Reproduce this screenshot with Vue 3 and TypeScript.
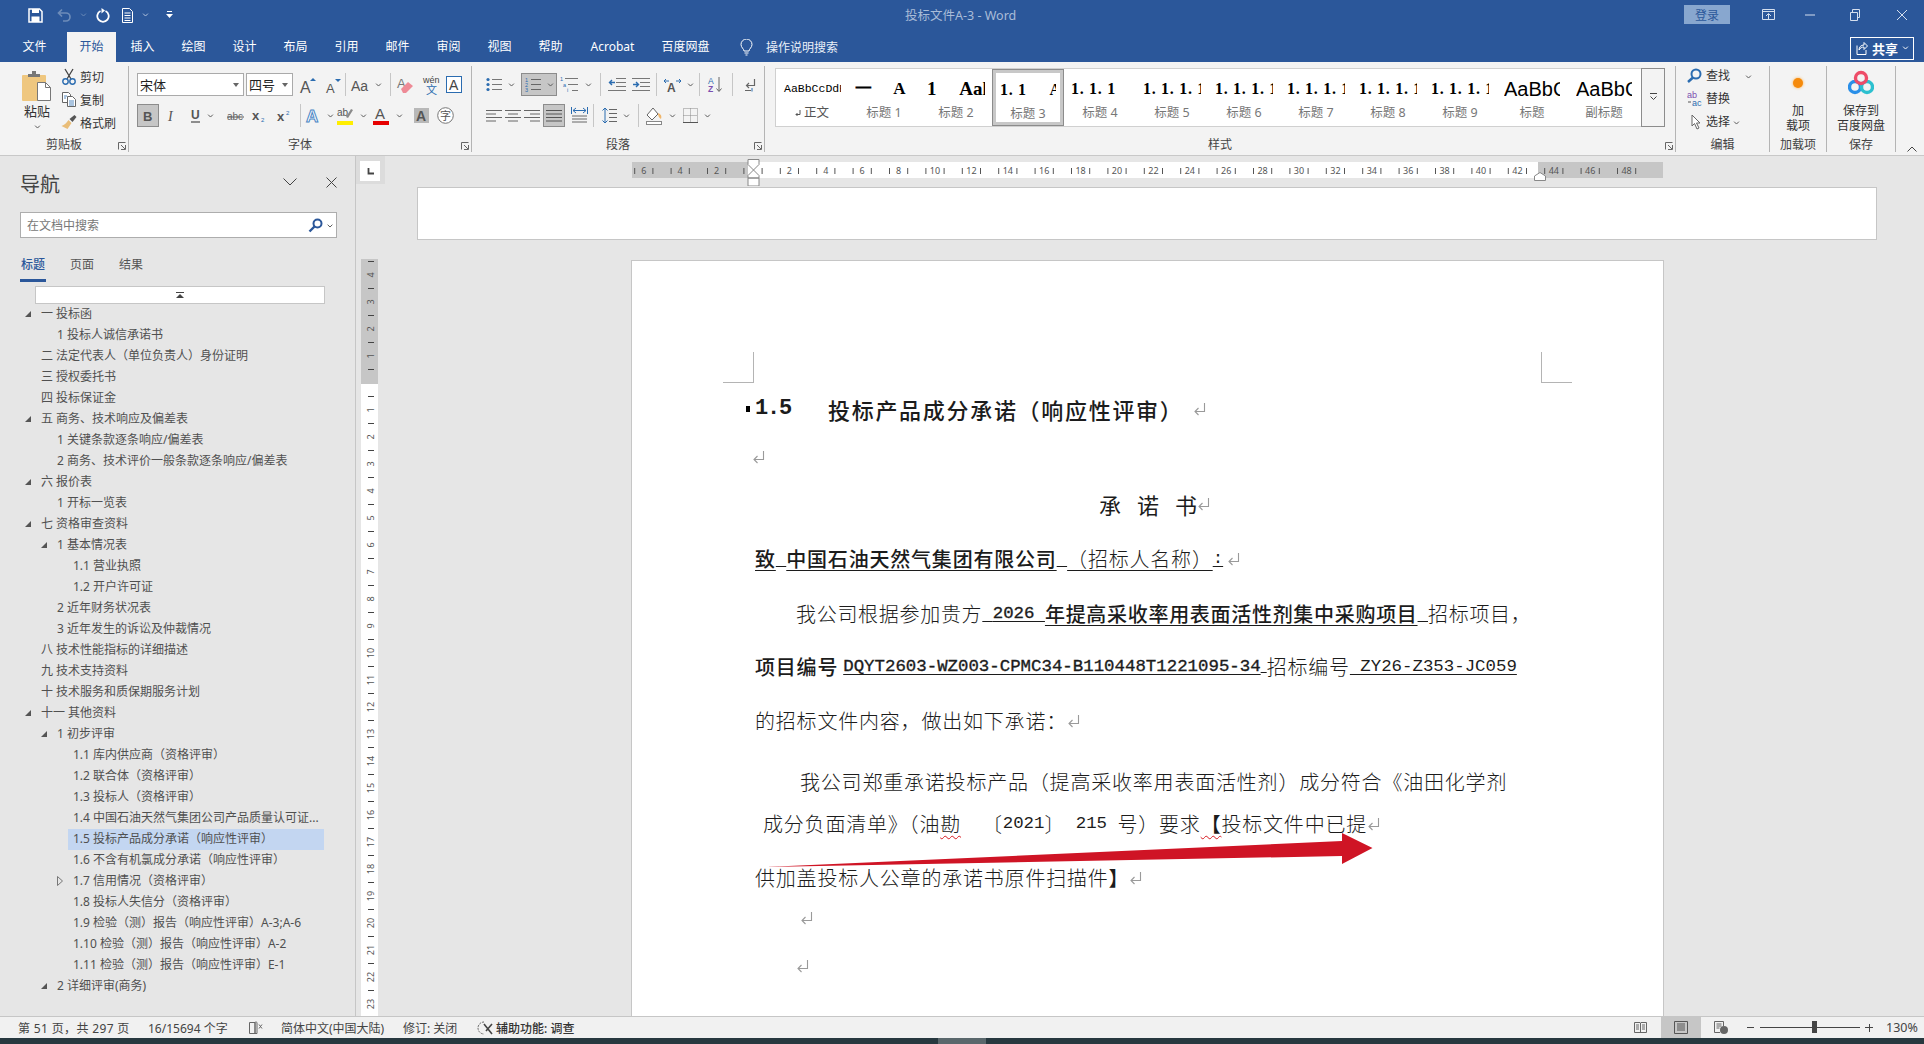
<script setup lang="ts">
interface Item { w: number; i?: string; iw?: number; ih?: number; c?: boolean; p?: boolean; sep?: boolean; sel?: string }
const ic = (w: number, i: string, iw: number, ih: number, c = false, p = false): Item => ({ w, i, iw, ih, c, p })
const gap = (w: number): Item => ({ w })
const sep = (): Item => ({ w: 1, sep: true })

const S = 'font-family="Liberation Sans"'
const B = '#2b6cb0'
const icons: Record<string, string> = {
  ret: `<path d="M10.500 1v6.500H3M5 5 2.500 7.500 5 10M1 12.500h6" fill="none" stroke="#666" stroke-width="1.200"/><path d="M8 10v3.500" stroke="${B}"/>`,
  agrow: `<text x="0" y="17" ${S} font-size="16" fill="#555">A</text><path d="M10 5l3-3 3 3z" fill="${B}"/>`,
  ashrink: `<text x="1" y="17" ${S} font-size="13" fill="#555">A</text><path d="M10 3h6l-3 3z" fill="${B}"/>`,
  aa: `<text x="0" y="14" ${S} font-size="14" fill="#555">Aa</text>`,
  eraser: `<text x="0" y="12" ${S} font-size="13" fill="#777">A</text><path d="M4 13l7-7 5 4-7 7H6z" fill="#ee8a96"/>`,
  wen: `<text x="0" y="8" ${S} font-size="9" fill="#444">wén</text><text x="3" y="19" font-family="Noto Sans CJK SC" font-size="11" fill="${B}">文</text>`,
  abox: `<rect x=".5" y=".5" width="15" height="16" fill="#fff" stroke="${B}"/><text x="3" y="14" ${S} font-size="14" fill="#444">A</text>`,
  bold: `<text x="1" y="12" ${S} font-weight="700" font-size="13" fill="#555">B</text>`,
  ital: `<text x="1" y="12" font-family="Liberation Serif" font-style="italic" font-size="14" fill="#555">I</text>`,
  under: `<text x="0" y="11" ${S} font-weight="700" font-size="12" fill="#555">U</text><path d="M0 14h9" stroke="#555" stroke-width="1.300"/>`,
  abc: `<text x="0" y="11" ${S} font-size="10" fill="#666">abc</text><path d="M0 8h17" stroke="#555"/>`,
  sub: `<text x="0" y="11" ${S} font-weight="700" font-size="13" fill="#555">x</text><text x="9" y="13" ${S} font-size="6" fill="${B}">2</text>`,
  sup: `<text x="0" y="12" ${S} font-weight="700" font-size="13" fill="#555">x</text><text x="9" y="6" ${S} font-size="6" fill="${B}">2</text>`,
  aglow: `<text x="1" y="15" ${S} font-weight="700" font-size="17" fill="#fff" stroke="#4a86c5" stroke-width="1">A</text>`,
  hl: `<text x="0" y="10" ${S} font-size="10" fill="#555">ab</text><path d="M9 11l5-8 2 1-5 8z" fill="#8a8a8a"/><rect y="15" width="16" height="4" fill="#ffee00"/>`,
  ared: `<text x="2" y="13" ${S} font-size="15" fill="#555">A</text><rect y="15" width="16" height="4" fill="#e60000"/>`,
  ashade: `<rect width="15" height="15" fill="#b8b8b8"/><text x="2" y="13" ${S} font-weight="700" font-size="14" fill="#555">A</text>`,
  zi: `<circle cx="8.500" cy="8.500" r="7.800" fill="#fff" stroke="#777"/><text x="3" y="13" font-family="Noto Sans CJK SC" font-size="11" fill="#555">字</text>`,
  bul: `<path d="M6 2.500h10M6 7.500h10M6 12.500h10" stroke="#777"/><circle cx="2" cy="2.500" r="1.600" fill="${B}"/><circle cx="2" cy="7.500" r="1.600" fill="${B}"/><circle cx="2" cy="12.500" r="1.600" fill="${B}"/>`,
  num: `<path d="M6 2.500h10M6 7.500h10M6 12.500h10" stroke="#666"/><text x="0" y="5" ${S} font-size="5.500" fill="${B}">1</text><text x="0" y="10" ${S} font-size="5.500" fill="${B}">2</text><text x="0" y="15" ${S} font-size="5.500" fill="${B}">3</text>`,
  multi: `<path d="M5 2.500h13M8 8.500h10M12 14.500h6" stroke="#777"/><text x="0" y="5" ${S} font-size="5.500" fill="${B}">1</text><text x="3" y="11" ${S} font-size="5.500" fill="${B}">a</text><text x="7" y="16" ${S} font-size="5.500" fill="${B}">i</text>`,
  outd: `<path d="M8 1.500h10M8 5.500h10M8 9.500h10M0 13.500h18" stroke="#777"/><path d="M7 5.500H2M4 3 1.500 5.500 4 8" fill="none" stroke="${B}" stroke-width="1.400"/>`,
  ind: `<path d="M0 1.500h18M8 5.500h10M8 9.500h10M0 13.500h18" stroke="#777"/><path d="M1 7.500h5M4 5l2.500 2.500L4 10" fill="none" stroke="${B}" stroke-width="1.400"/>`,
  ax: `<text x="3" y="14" ${S} font-weight="700" font-size="12" fill="#555">A</text><path d="M0 3h5M2 1 0 3l2 2M17 3h-5M15 1l2 2-2 2" fill="none" stroke="${B}"/>`,
  sort: `<text x="0" y="8" ${S} font-size="8.500" fill="${B}">A</text><text x="0" y="16" ${S} font-weight="700" font-size="8.500" fill="#7a4fb0">Z</text><path d="M11 1v14M8.500 12.500 11 15.500l2.500-3" fill="none" stroke="#666"/>`,
  al: `<path d="M0 .5h16M0 4h10M0 7.500h16M0 11h10" stroke="#666"/>`,
  ac: `<path d="M0 .5h16M3 4h10M0 7.500h16M3 11h10" stroke="#666"/>`,
  ar: `<path d="M0 .5h16M6 4h10M0 7.500h16M6 11h10" stroke="#666"/>`,
  aj: `<path d="M0 .5h16M0 4h16M0 7.500h16M0 11h16" stroke="#555"/>`,
  ad: `<path d="M1 9h15M1 12h15M1 15h15" stroke="#666"/><path d="M.5 0v7M16.500 0v7M2 3.500h13M5 1 2 3.500 5 6M12 1l3 2.500-3 2.500" fill="none" stroke="${B}"/>`,
  ls: `<path d="M7 2.500h8M7 6.500h8M7 10.500h8M7 14.500h8" stroke="#666"/><path d="M3 1v15M.5 3.500 3 1l2.500 2.500M.5 13.500 3 16l2.500-2.500" fill="none" stroke="${B}"/>`,
  fill: `<path d="M7 1 1 8l5 5 6-6z" fill="#fff" stroke="#666"/><path d="M12 6c3 1 4 3 3 6-2-1-3-3-3-6z" fill="#f0b66b"/><rect x=".5" y="14.500" width="15" height="3" fill="#fff" stroke="#888"/>`,
  brd: `<path d="M.5.500h14v14H.5zM.5 7.500h14M7.500.500v14" fill="none" stroke="#888" stroke-dasharray="1 1"/><path d="M0 14.500h15" stroke="#555"/>`
}

const fontR1: Item[] = [
  { w: 107, sel: '宋体' }, gap(2), { w: 47, sel: '四号' }, gap(3),
  ic(24, 'agrow', 17, 18), gap(1), ic(24, 'ashrink', 17, 18), sep(),
  ic(40, 'aa', 18, 16, true), gap(4), sep(),
  ic(29, 'eraser', 17, 18), ic(23, 'wen', 18, 20), ic(22, 'abox', 16, 17)
]
const fontR2: Item[] = [
  ic(22, 'bold', 12, 14, false, true), gap(4), ic(18, 'ital', 10, 14), gap(3), ic(36, 'under', 10, 15, true),
  gap(3), ic(24, 'abc', 17, 14), ic(24, 'sub', 14, 14), ic(25, 'sup', 14, 14), gap(4), sep(), gap(3),
  ic(30, 'aglow', 16, 18, true), gap(3), ic(30, 'hl', 17, 19, true), gap(4), ic(34, 'ared', 17, 19, true), gap(5),
  ic(22, 'ashade', 15, 15), gap(1), ic(24, 'zi', 17, 17)
]
const paraR1: Item[] = [
  gap(8), ic(37, 'bul', 16, 15, true), gap(2), ic(36, 'num', 16, 15, true, true), gap(2),
  ic(33, 'multi', 19, 17, true), gap(8), sep(), gap(4), ic(24, 'outd', 18, 15), ic(24, 'ind', 18, 15), gap(3), sep(), gap(4),
  ic(36, 'ax', 17, 14, true), gap(2), sep(), gap(4), ic(22, 'sort', 15, 17), gap(6), sep(), gap(6), ic(22, 'ret', 12, 14)
]
const paraR2: Item[] = [
  gap(10), ic(19, 'al', 16, 12), ic(19, 'ac', 16, 12), ic(19, 'ar', 16, 12), gap(2), ic(22, 'aj', 16, 12, false, true),
  gap(4), ic(20, 'ad', 17, 17), gap(4), sep(), gap(5), ic(33, 'ls', 15, 17, true), gap(6), sep(), gap(4),
  ic(36, 'fill', 17, 18, true), gap(1), ic(34, 'brd', 15, 15, true)
]

const gallery = [
  { t: 'AaBbCcDdEe', l: '正文', k: 'g0', ret: true },
  { t: '一     A', l: '标题 1', k: 'g1' },
  { t: '1     Aal', l: '标题 2', k: 'g1 g2' },
  { t: '1. 1     A', l: '标题 3', k: 'g3', on: true },
  { t: '1. 1. 1', l: '标题 4', k: 'g3' },
  { t: '1. 1. 1. 1', l: '标题 5', k: 'g3' },
  { t: '1. 1. 1. 1', l: '标题 6', k: 'g3' },
  { t: '1. 1. 1. 1', l: '标题 7', k: 'g3' },
  { t: '1. 1. 1. 1', l: '标题 8', k: 'g3' },
  { t: '1. 1. 1. 1', l: '标题 9', k: 'g3' },
  { t: 'AaBbCc', l: '标题', k: 'g4' },
  { t: 'AaBbCc', l: '副标题', k: 'g4' }
]

const tabs = ['插入', '绘图', '设计', '布局', '引用', '邮件', '审阅', '视图', '帮助']

const tree: [string, number, number?][] = [
  ['一 投标函', 0, 1], ['1 投标人诚信承诺书', 1], ['二 法定代表人（单位负责人）身份证明', 0], ['三 授权委托书', 0], ['四 投标保证金', 0],
  ['五 商务、技术响应及偏差表', 0, 1], ['1 关键条款逐条响应/偏差表', 1], ['2 商务、技术评价一般条款逐条响应/偏差表', 1],
  ['六 报价表', 0, 1], ['1 开标一览表', 1], ['七 资格审查资料', 0, 1], ['1 基本情况表', 1, 1], ['1.1 营业执照', 2], ['1.2 开户许可证', 2],
  ['2 近年财务状况表', 1], ['3 近年发生的诉讼及仲裁情况', 1], ['八 技术性能指标的详细描述', 0], ['九 技术支持资料', 0], ['十 技术服务和质保期服务计划', 0],
  ['十一 其他资料', 0, 1], ['1 初步评审', 1, 1], ['1.1 库内供应商（资格评审）', 2], ['1.2 联合体（资格评审）', 2], ['1.3 投标人（资格评审）', 2],
  ['1.4 中国石油天然气集团公司产品质量认可证...', 2], ['1.5 投标产品成分承诺（响应性评审）', 2], ['1.6 不含有机氯成分承诺（响应性评审）', 2],
  ['1.7 信用情况（资格评审）', 2, 2], ['1.8 投标人失信分（资格评审）', 2], ['1.9 检验（测）报告（响应性评审）A-3;A-6', 2],
  ['1.10 检验（测）报告（响应性评审）A-2', 2], ['1.11 检验（测）报告（响应性评审）E-1', 2], ['2 详细评审(商务)', 1, 1]
]

const O = 121
const hNums: { n: number; x: number }[] = []
for (const n of [6, 4, 2]) hNums.push({ n, x: O - 18.2 * n })
for (let n = 2; n <= 48; n += 2) hNums.push({ n, x: O + 18.2 * n })
const hTicks: number[] = []
for (let k = -7; k <= 48; k++) hTicks.push(O + 9.1 + 18.2 * k)

const V0 = 124
const vNums: { n: number; y: number }[] = []
for (const n of [4, 3, 2, 1]) vNums.push({ n, y: V0 - 27 * n })
for (let n = 1; n <= 23; n++) vNums.push({ n, y: V0 + 27 * n })
const vTicks: number[] = []
for (let k = -9; k <= 23; k++) vTicks.push(V0 + 13.5 + 27 * k)
</script>

<template>
  <div class="app">
    <svg class="sprite" width="0" height="0" aria-hidden="true">
      <symbol id="chev" viewBox="0 0 7 5"><path d="M.5 .8 3.500 3.800 6.500 .8" fill="none" stroke="#555" stroke-width="1.200" /></symbol>
      <symbol id="r" viewBox="0 0 13 14"><path d="M11.500 1v8.500H2M5.500 6 2 9.500 5.500 13" fill="none" stroke="#9a9a9a" stroke-width="1.100" /></symbol>
    </svg>

    <header class="titlebar">
      <div class="qat">
        <svg width="15" height="15" viewBox="0 0 15 15"><path d="M1 1h10.500L14 3.500V14H1z" fill="none" stroke="#fff" stroke-width="1.500" /><rect x="4" y="1" width="7" height="4" fill="#fff" /><rect x="3.500" y="8.500" width="8" height="5.500" fill="#fff" /></svg>
        <svg class="q-undo" width="15" height="14" viewBox="0 0 15 14"><path d="M2 5h7a4 4 0 0 1 0 8H6M5 1.500 1.500 5 5 8.500" fill="none" stroke="#6d8cb9" stroke-width="1.700" /></svg>
        <svg class="q-c1" width="7" height="4" viewBox="0 0 7 5"><path d="M.5 .8 3.500 3.800 6.500 .8" fill="none" stroke="#6d8cb9" stroke-width="1.200" /></svg>
        <svg class="q-redo" width="14" height="15" viewBox="0 0 14 15"><path d="M9.500 3a5.700 5.700 0 1 1-5 0" fill="none" stroke="#fff" stroke-width="1.800" /><path d="M5.500 0v5.500L9 2.500z" fill="#fff" /></svg>
        <svg class="q-doc" width="11" height="15" viewBox="0 0 11 15"><path d="M.5.500h7l3 3v11H.5z" fill="none" stroke="#fff" /><path d="M2.500 5h6M2.500 7.500h6M2.500 10h6M2.500 12.500h6" stroke="#fff" /></svg>
        <svg class="q-c2" width="7" height="4" viewBox="0 0 7 5"><path d="M.5 .8 3.500 3.800 6.500 .8" fill="none" stroke="#b8c8e0" stroke-width="1.200" /></svg>
        <svg class="q-more" width="7" height="8" viewBox="0 0 7 8"><path d="M1 .5h5" stroke="#fff" /><path d="M0 3h7L3.500 7z" fill="#fff" /></svg>
      </div>
      <div class="doc-title">投标文件A-3  -  Word</div>
      <div class="win">
        <button class="login">登录</button>
        <svg class="w1" width="13" height="11" viewBox="0 0 13 11"><path d="M.5.500h12v10H.500zM.5 2.500h12M6.500 10V5M4 7l2.500-2.500L9 7" fill="none" stroke="#d5dfee" /></svg>
        <svg class="w2" width="10" height="2" viewBox="0 0 10 2"><path d="M0 1h10" stroke="#d5dfee" /></svg>
        <svg class="w3" width="10" height="12" viewBox="0 0 10 12"><path d="M.5 3.500h7v8h-7zM2.500 3.500V.5h7v8h-2" fill="none" stroke="#d5dfee" /></svg>
        <svg class="w4" width="12" height="12" viewBox="0 0 12 12"><path d="M1 1l10 10M11 1 1 11" stroke="#d5dfee" /></svg>
      </div>
    </header>

    <nav class="tabs">
      <span class="tab first">文件</span>
      <span class="tab active">开始</span>
      <span v-for="t in tabs" :key="t" class="tab">{{ t }}</span>
      <span class="tab wide">Acrobat</span>
      <span class="tab wide">百度网盘</span>
      <svg class="bulb" width="13" height="17" viewBox="0 0 13 17"><path d="M4 12c0-2-3-3.500-3-6.500a5.500 5.500 0 0 1 11 0C12 8.500 9 10 9 12zM4.500 14h4M5.500 16h2" fill="none" stroke="#fff" /></svg>
      <span class="tell">操作说明搜索</span>
      <span class="share">
        <svg width="12" height="14" viewBox="0 0 12 14"><path d="M1 4.500v9h9V9M3 9c0-3 2-5 5-5V1.500L11.500 5 8 8.500V6C6 6 4 7 3 9z" fill="none" stroke="#fff" /></svg>
        <b>共享</b>
        <svg width="7" height="4" viewBox="0 0 7 5"><path d="M.5 .8 3.500 3.800 6.500 .8" fill="none" stroke="#fff" stroke-width="1.200" /></svg>
      </span>
    </nav>

    <section class="ribbon">
      <div class="grp g-clip">
        <div class="grp-body clip-body">
          <div class="paste">
            <svg width="30" height="30" viewBox="0 0 30 30"><rect x="0" y="4" width="24" height="26" rx="1" fill="#efc77f" /><path d="M6 6V3h4V0h4v3h4v3z" fill="#777" /><path d="M15.500 11.500h8l5 5v13h-13z" fill="#fff" stroke="#777" /><path d="M23.500 11.500v5h5" fill="none" stroke="#777" /></svg>
            <span class="paste-l">粘贴</span>
            <svg width="7" height="4"><use href="#chev" /></svg>
          </div>
          <div class="mini-col">
            <div class="mini"><svg class="mi" width="14" height="17" viewBox="0 0 14 17"><path d="M3 1l6 10M11 1 5 11" stroke="#444" stroke-width="1.300" /><circle cx="3.500" cy="13.500" r="2.700" fill="none" stroke="#2b6cb0" stroke-width="1.400" /><circle cx="10.500" cy="13.500" r="2.700" fill="none" stroke="#2b6cb0" stroke-width="1.400" /></svg>剪切</div>
            <div class="mini"><svg class="mi" width="14" height="15" viewBox="0 0 14 15"><path d="M.5.500h6l2 2v8h-8z" fill="#fff" stroke="#666" /><path d="M5.500 4.500h5l3 3v7h-8z" fill="#fff" stroke="#666" /><path d="M2 4h3M2 6h2M7 9h5M7 11h5M7 13h5" stroke="#2b6cb0" stroke-width=".8" /></svg>复制</div>
            <div class="mini"><svg class="mi" width="15" height="15" viewBox="0 0 15 15"><path d="M8 4l3 3 4-5-2-2z" fill="#555" /><path d="M7 5l3 3-4 6-6-3c3-1 5-3 7-6z" fill="#e9bd78" /></svg>格式刷</div>
          </div>
        </div>
        <div class="grp-label">剪贴板</div>
        <svg class="launch" width="8" height="8" viewBox="0 0 8 8"><path d="M.5 7.500v-7h7M7.500 3v4.500H3M3 3l4 4" fill="none" stroke="#666" /></svg>
      </div>

      <div class="grp g-font">
        <div class="grp-body rows">
          <div v-for="(row, r) in [fontR1, fontR2]" :key="r" class="tb-row">
            <template v-for="(it, k) in row" :key="k">
              <span v-if="it.sep" class="tb-sep" />
              <span v-else-if="it.sel" class="select" :style="{ width: it.w + 'px' }"><span class="sel-t">{{ it.sel }}</span><i class="caret" /></span>
              <span v-else-if="it.i" class="cell" :class="{ pressed: it.p }" :style="{ width: it.w + 'px' }">
                <svg :width="it.iw" :height="it.ih" :viewBox="`0 0 ${it.iw} ${it.ih}`" v-html="icons[it.i]" />
                <svg v-if="it.c" class="c" width="7" height="4"><use href="#chev" /></svg>
              </span>
              <span v-else :style="{ width: it.w + 'px' }" />
            </template>
          </div>
        </div>
        <div class="grp-label">字体</div>
        <svg class="launch" width="8" height="8" viewBox="0 0 8 8"><path d="M.5 7.500v-7h7M7.500 3v4.500H3M3 3l4 4" fill="none" stroke="#666" /></svg>
      </div>

      <div class="grp g-para">
        <div class="grp-body rows para">
          <div v-for="(row, r) in [paraR1, paraR2]" :key="r" class="tb-row">
            <template v-for="(it, k) in row" :key="k">
              <span v-if="it.sep" class="tb-sep" />
              <span v-else-if="it.i" class="cell" :class="{ pressed: it.p }" :style="{ width: it.w + 'px' }">
                <svg :width="it.iw" :height="it.ih" :viewBox="`0 0 ${it.iw} ${it.ih}`" v-html="icons[it.i]" />
                <svg v-if="it.c" class="c" width="7" height="4"><use href="#chev" /></svg>
              </span>
              <span v-else :style="{ width: it.w + 'px' }" />
            </template>
          </div>
        </div>
        <div class="grp-label">段落</div>
        <svg class="launch" width="8" height="8" viewBox="0 0 8 8"><path d="M.5 7.500v-7h7M7.500 3v4.500H3M3 3l4 4" fill="none" stroke="#666" /></svg>
      </div>

      <div class="grp g-style">
        <div class="grp-body gallery-wrap">
          <div class="gallery">
            <div v-for="g in gallery" :key="g.l" class="gi" :class="{ on: g.on }">
              <div class="gi-p" :class="g.k">{{ g.t }}</div>
              <div class="gi-l" :class="{ dark: g.ret }"><svg v-if="g.ret" class="gi-ret" width="6" height="7" viewBox="0 0 6 7"><path d="M5 0v4.500H1M2.500 3 1 4.500 2.500 6" fill="none" stroke="#555" /></svg>{{ g.l }}</div>
            </div>
          </div>
          <div class="more"><svg width="7" height="8" viewBox="0 0 7 8"><path d="M0 .5h7M.5 3.500 3.500 6.500 6.500 3.500" fill="none" stroke="#444" /></svg></div>
        </div>
        <div class="grp-label">样式</div>
        <svg class="launch" width="8" height="8" viewBox="0 0 8 8"><path d="M.5 7.500v-7h7M7.500 3v4.500H3M3 3l4 4" fill="none" stroke="#666" /></svg>
      </div>

      <div class="grp g-edit">
        <div class="grp-body edit-col">
          <div class="ed"><svg class="ed-i" width="15" height="15" viewBox="0 0 15 15"><circle cx="9" cy="6" r="4.500" fill="none" stroke="#2b6cb0" stroke-width="2" /><path d="M6 9.500 1 14" stroke="#2b6cb0" stroke-width="2.500" /></svg>查找<svg class="ed-c1" width="7" height="4"><use href="#chev" /></svg></div>
          <div class="ed"><svg class="ed-i" width="16" height="17" viewBox="0 0 16 17"><text x="0" y="8" font-family="Liberation Sans" font-size="9" fill="#7a4fb0">ab</text><text x="5" y="16" font-family="Liberation Sans" font-size="9" fill="#2b6cb0">ac</text><path d="M1 12h3" stroke="#555" /></svg>替换</div>
          <div class="ed"><svg class="ed-i2" width="10" height="16" viewBox="0 0 10 16"><path d="M1 1v11l2.500-2.500L6 15l2-1-2.500-5H9z" fill="#fff" stroke="#666" /></svg>选择<svg class="ed-c2" width="7" height="4"><use href="#chev" /></svg></div>
        </div>
        <div class="grp-label">编辑</div>
      </div>

      <div class="grp g-add">
        <div class="grp-body big">
          <span class="dot" />
          <span class="big-t">加<br />载项</span>
        </div>
        <div class="grp-label">加载项</div>
      </div>

      <div class="grp g-save">
        <div class="grp-body big">
          <svg class="cloud" width="26" height="26" viewBox="0 0 26 26"><circle cx="7" cy="17" r="5.500" fill="none" stroke="#2a8fe8" stroke-width="3.400" /><circle cx="19" cy="17" r="5.500" fill="none" stroke="#2cc0cf" stroke-width="3.400" /><circle cx="13" cy="8" r="5.500" fill="none" stroke="#ee4c68" stroke-width="3.400" /></svg>
          <span class="big-t">保存到<br />百度网盘</span>
        </div>
        <div class="grp-label">保存</div>
      </div>
      <svg class="collapse" width="10" height="6" viewBox="0 0 10 6"><path d="M.5 5.500 5 1l4.500 4.500" fill="none" stroke="#444" /></svg>
    </section>

    <main class="main">
      <aside class="nav">
        <div class="nav-head">
          <span class="nav-title">导航</span>
          <svg class="nh-c" width="14" height="8" viewBox="0 0 14 8"><path d="M.5.500 7 7 13.500.500" fill="none" stroke="#444" /></svg>
          <svg class="nh-x" width="11" height="11" viewBox="0 0 11 11"><path d="M.5.500l10 10M10.500.500l-10 10" stroke="#444" /></svg>
        </div>
        <div class="search">
          <span>在文档中搜索</span>
          <svg class="s-i" width="15" height="15" viewBox="0 0 15 15"><circle cx="9.500" cy="5.500" r="4" fill="none" stroke="#2b579a" stroke-width="2" /><path d="M6.500 8.500 1.500 13.500" stroke="#2b579a" stroke-width="2.400" /></svg>
          <svg class="s-c" width="6" height="4"><use href="#chev" /></svg>
        </div>
        <div class="nav-tabs">
          <span class="nt on">标题</span><span class="nt">页面</span><span class="nt">结果</span>
        </div>
        <div class="scrollup"><svg width="8" height="6" viewBox="0 0 8 6"><path d="M0 .5h8" stroke="#444" /><path d="M0 6l4-4 4 4z" fill="#444" /></svg></div>
        <ul class="tree">
          <li v-for="(n, i) in tree" :key="i" class="node" :class="{ sel: i === 25 }" :style="{ marginLeft: 36 + n[1] * 16 + 'px' }">
            <svg v-if="n[2] === 1" class="exp" width="6" height="6" viewBox="0 0 6 6"><path d="M6 0v6H0z" fill="#555" /></svg>
            <svg v-if="n[2] === 2" class="exp e2" width="6" height="10" viewBox="0 0 6 10"><path d="M.5.500 5.500 5 .5 9.500z" fill="none" stroke="#777" /></svg>
            {{ n[0] }}
          </li>
        </ul>
      </aside>

      <div class="doc">
        <div class="ruler-row">
          <div class="corner"><span class="corner-in"><svg width="7" height="7" viewBox="0 0 7 7"><path d="M1.500 0v5.500H7" fill="none" stroke="#444" stroke-width="1.800" /></svg></span></div>
          <div class="hruler">
            <svg width="1031" height="16" viewBox="0 0 1031 16">
              <rect width="1031" height="16" fill="#fff" />
              <rect width="116" height="16" fill="#c6c6c6" />
              <rect x="906" width="125" height="16" fill="#c6c6c6" />
              <path v-for="t in hTicks" :key="t" :d="`M${t} 6v6`" stroke="#555" />
              <text v-for="h in hNums" :key="h.x" :x="h.x" y="12" text-anchor="middle" class="rn">{{ h.n }}</text>
            </svg>
            <svg class="m-l" width="14" height="27" viewBox="0 0 14 27"><path d="M1 .5h11v5L6.500 11 1 5.500zM6.500 11 12 16.500V19H1v-2.500zM1 19h11v8H1z" fill="#fff" stroke="#888" /></svg>
            <svg class="m-r" width="12" height="9" viewBox="0 0 12 9"><path d="M.5 8.500V4L6 .5 11.500 4v4.500z" fill="#fff" stroke="#888" /></svg>
          </div>
        </div>
        <div class="doc-body">
          <div class="vruler">
            <svg width="17" height="757" viewBox="0 0 17 757">
              <rect width="17" height="757" fill="#fff" />
              <rect width="17" height="125" fill="#c6c6c6" />
              <path v-for="t in vTicks" :key="t" :d="`M7 ${t}h6`" stroke="#444" />
              <text v-for="v in vNums" :key="v.y" class="rn" text-anchor="middle" :transform="`translate(13 ${v.y}) rotate(-90)`">{{ v.n }}</text>
            </svg>
          </div>
          <div class="canvas">
            <div class="prev-page" />
            <article class="page">
              <span class="crop crop-l" /><span class="crop crop-r" />
              <div class="line h1"><span class="pm" /><span class="h-n">1.5</span><span class="h-t">投标产品成分承诺（响应性评审）</span><svg class="rt r9"><use href="#r" /></svg></div>
              <div class="line mt8"><svg class="rt rn3"><use href="#r" /></svg></div>
              <div class="line title mt7"><span class="tc">承</span><span class="tc">诺</span><span>书</span><svg class="rt r0"><use href="#r" /></svg></div>
              <div class="line mt15"><span class="u b">致</span><span class="u m">&nbsp;</span><span class="u b">中国石油天然气集团有限公司</span><span class="u m">&nbsp;</span><span class="u">（招标人名称）</span><span class="u m">:</span><svg class="rt"><use href="#r" /></svg></div>
              <div class="line mt15 i41 l7">我公司根据参加贵方<span class="u m">&nbsp;</span><span class="u m mb">2026&nbsp;</span><span class="u b">年提高采收率用表面活性剂集中采购项目</span><span class="u m">&nbsp;</span>招标项目，</div>
              <div class="line mt13"><span class="b">项目编号</span><span class="sp5" /><span class="u m mb">DQYT2603-WZ003-CPMC34-B110448T1221095-34</span><span class="u m tiny">&nbsp;</span>招标编号<span class="u m">&nbsp;ZY26-Z353-JC059</span></div>
              <div class="line mt14">的招标文件内容，做出如下承诺：<svg class="rt r0"><use href="#r" /></svg></div>
              <div class="line mt21 i45">我公司郑重承诺投标产品（提高采收率用表面活性剂）成分符合《油田化学剂</div>
              <div class="line mt2 i8">成分负面清单》（油<span class="wavy">勘</span><span class="m">&nbsp;&nbsp;</span>〔<span class="m">2021</span>〕<span class="m">&nbsp;215&nbsp;</span>号）要求<span class="wavy b">【</span>投标文件中已提<svg class="rt r0"><use href="#r" /></svg></div>
              <div class="line mt14">供加盖投标人公章的承诺书原件扫描件<span class="b">】</span><svg class="rt r0"><use href="#r" /></svg></div>
              <div class="line i45"><svg class="rt r0"><use href="#r" /></svg></div>
              <div class="line mt8 i41"><svg class="rt r0"><use href="#r" /></svg></div>
              <svg class="arrow" width="620" height="50" viewBox="130 565 620 50"><path d="M134 606 710 580v-8l30.500 15L710 603v-8z" fill="#cf1425" /></svg>
            </article>
          </div>
        </div>
      </div>
    </main>

    <footer class="status">
      <span class="st s1">第 51 页，共 297 页</span>
      <span class="st s2">16/15694 个字</span>
      <svg class="s3" width="14" height="14" viewBox="0 0 14 14"><path d="M6 1.500H.5v11H6zM6 1.500c1-.7 1-.7 2 0v11H6z" fill="none" stroke="#666" /><path d="M10 3.500l3 4M13 3.500l-3 4" stroke="#666" /></svg>
      <span class="st s4">简体中文(中国大陆)</span>
      <span class="st s5">修订: 关闭</span>
      <svg class="s6" width="17" height="16" viewBox="0 0 17 16"><path d="M7 2a6 6 0 1 0 0 12" fill="none" stroke="#666" stroke-dasharray="2 1" /><path d="M7 4l8 10M15 4 9 11" stroke="#444" stroke-width="1.600" /></svg>
      <span class="st s7">辅助功能: 调查</span>
      <div class="views">
        <svg class="v1" width="13" height="13" viewBox="0 0 13 13"><path d="M.5 1.500h5.500l.5.500.5-.5h5.500v10H7l-.5.500-.5-.5H.500zM6.500 2v10M2 4h3M2 6h3M2 8h3M8 4h3M8 6h3M8 8h3" fill="none" stroke="#666" /></svg>
        <span class="v-on"><svg width="14" height="13" viewBox="0 0 14 13"><path d="M.5.500h13v12H.5zM3 3h8M3 5h8M3 7h8M3 9h8" fill="none" stroke="#555" /></svg></span>
        <svg class="v3" width="14" height="13" viewBox="0 0 14 13"><path d="M6 11.500H.5V.5h9V5M2.500 3h5M2.500 5h5M2.500 7h3" fill="none" stroke="#666" /><circle cx="10" cy="9" r="4" fill="#666" /></svg>
        <span class="z-minus" /><span class="slider"><i /></span><span class="z-plus" />
        <span class="st zoom">130%</span>
      </div>
    </footer>
    <div class="taskbar"><span /></div>
  </div>
</template>

<style>
html, body { margin: 0; padding: 0; background: #e6e6e6; overflow: hidden; }
</style>

<style scoped>
* { box-sizing: border-box; }
.sprite { position: absolute; }
.app { width: 1924px; height: 1044px; display: flex; flex-direction: column; overflow: hidden; font-family: "Noto Sans", "Noto Sans CJK SC", sans-serif; font-size: 12px; color: #444; background: #e6e6e6; }

.titlebar { height: 32px; background: #2b579a; display: flex; align-items: center; position: relative; flex: none; }
.qat { width: 905px; padding-left: 28px; display: flex; align-items: center; flex: none; margin-top: -2px; }
.q-undo { margin-left: 14px; } .q-c1 { margin-left: 8px; } .q-redo { margin-left: 9px; } .q-doc { margin-left: 12px; } .q-c2 { margin-left: 9px; } .q-more { margin-left: 17px; }
.doc-title { width: 122px; color: #a9bcd8; white-space: pre; font-size: 12.5px; margin-top: -3px; }
.win { margin-left: auto; width: 238px; display: flex; align-items: center; margin-top: -3px; }
.login { margin-left: -2px; width: 46px; height: 19px; background: #88a7cf; border: 0; color: #2b579a; font: 12px "Noto Sans CJK SC", sans-serif; padding: 0; }
.w1 { margin-left: 32px; } .w2 { margin-left: 30px; } .w3 { margin-left: 35px; } .w4 { margin-left: 36px; }

.tabs { height: 30px; background: #2b579a; display: flex; align-items: center; padding-left: 10px; color: #fff; flex: none; }
.tab { width: 49px; height: 30px; line-height: 29px; text-align: center; margin-right: 2px; flex: none; }
.tab.first { margin-right: 8px; }
.tab.active { background: #f3f3f3; color: #2b579a; }
.tab.wide { width: 71px; }
.bulb { margin-left: 17px; flex: none; }
.tell { margin-left: 13px; color: #eaf0f8; }
.share { margin-left: auto; margin-right: 10px; margin-top: 2px; width: 64px; height: 23px; border: 1px solid #fff; display: flex; align-items: center; padding-left: 5px; gap: 4px; color: #fff; }
.share b { font-size: 13px; font-weight: 700; }

.ribbon { height: 94px; background: #f3f3f3; border-bottom: 1px solid #c8c8c8; padding-top: 4px; display: flex; position: relative; flex: none; }
.grp { height: 86px; border-right: 1px solid #b4b4b4; display: flex; flex-direction: column; position: relative; flex: none; }
.grp-body { flex: 1; min-height: 0; }
.grp-label { height: 15px; line-height: 16px; text-align: center; color: #444; }
.launch { position: absolute; right: 2px; bottom: 2px; }
.g-clip { width: 129px; }
.g-font { width: 343px; }
.g-para { width: 293px; }
.g-style { width: 911px; }
.g-edit { width: 94px; }
.g-add { width: 57px; }
.g-save { width: 69px; }

.clip-body { display: flex; }
.paste { width: 34px; margin-left: 20px; display: flex; flex-direction: column; align-items: center; padding-top: 5px; color: #333; }
.paste-l { font-size: 13px; line-height: 18px; margin-top: 1px; margin-bottom: 5px; }
.mini-col { margin-left: 6px; display: flex; flex-direction: column; margin-top: -1px; }
.mini { height: 23px; display: flex; align-items: center; color: #333; font-size: 12px; }
.mini .mi { margin-right: 2px; width: 18px; }

.rows { padding: 7px 0 0 8px; display: flex; flex-direction: column; gap: 8px; }
.rows.para { padding-left: 2px; }
.tb-row { height: 23px; display: flex; align-items: center; }
.tb-row > span { flex: none; height: 23px; }
.tb-sep { width: 1px; background: #c6c6c6; }
.select { background: #fff; border: 1px solid #aaa; display: flex; align-items: center; padding-left: 2px; position: relative; color: #222; font-size: 13px; }
.caret { position: absolute; right: 4px; top: 9px; border: 3.5px solid transparent; border-top: 4px solid #666; border-bottom: 0; }
.cell { display: flex; align-items: center; justify-content: center; gap: 5px; }
.cell svg { overflow: visible; }
.cell.pressed { background: #c6c6c6; border: 1px solid #8c8c8c; }
.cell .c { margin-left: 1px; }

.gallery-wrap { display: flex; padding: 2px 0 0 10px; align-items: flex-start; }
.gallery { width: 866px; height: 59px; background: #fff; border: 1px solid #d0d0d0; border-right: 0; display: flex; }
.gi { width: 72px; height: 57px; flex: none; overflow: hidden; }
.gi.on { border: 1px solid #8c8c8c; box-shadow: inset 0 0 0 3px #c8c8c8; }
.gi-p { height: 33px; padding: 0 7px; margin-top: 3px; line-height: 34px; white-space: pre; overflow: hidden; color: #000; clip-path: inset(0 7px); }
.g0 { font: 11.5px/34px "Liberation Mono", monospace; padding: 0 6px 0 8px; }
.g1 { font: 700 17px/34px "Liberation Serif", serif; }
.g2 { font-size: 19px; }
.g3 { font: 700 16px/34px "Liberation Serif", serif; letter-spacing: .7px; }
.g4 { font: 20px/34px "Liberation Sans", sans-serif; padding: 0 8px; clip-path: inset(0 8px); }
.gi-l { text-align: center; color: #777; line-height: 16px; font-size: 12.5px; }
.gi-l.dark { color: #555; }
.gi-ret { margin-right: 3px; }
.more { width: 24px; height: 59px; background: #f3f3f3; border: 1px solid #8c8c8c; display: flex; align-items: center; justify-content: center; padding-bottom: 2px; }

.edit-col { display: flex; flex-direction: column; padding-left: 30px; margin-top: -2px; }
.ed { height: 23px; display: flex; align-items: center; position: relative; color: #333; font-size: 12px; line-height: 20px; }
.ed-i { position: absolute; left: -19px; } .ed-i2 { position: absolute; left: -15px; }
.ed-c1 { margin-left: 15px; margin-top: 2px; } .ed-c2 { margin-left: 3px; margin-top: 2px; }

.big { display: flex; flex-direction: column; align-items: center; position: relative; }
.dot { width: 10px; height: 10px; border-radius: 50%; background: #f58a0b; box-shadow: 0 0 3px #ffb04a; margin: 12px 0 15px; flex: none; }
.cloud { margin: 4px 0 7px; flex: none; }
.big-t { text-align: center; line-height: 15px; color: #333; font-size: 12px; }
.collapse { position: absolute; right: 7px; bottom: 3px; }

.main { flex: 1; min-height: 0; display: flex; }
.nav { width: 356px; border-right: 1px solid #c6c6c6; flex: none; overflow: hidden; }
.nav-head { height: 56px; display: flex; align-items: center; padding-left: 20px; }
.nav-title { font-size: 20px; color: #444; width: 263px; margin-top: -1px; }
.nh-c { margin-top: -4px; } .nh-x { margin-left: 29px; margin-top: -4px; }
.search { margin-left: 20px; width: 317px; height: 26px; background: #fff; border: 1px solid #adadad; display: flex; align-items: center; padding-left: 6px; color: #777; position: relative; }
.s-i { position: absolute; right: 13px; top: 5px; } .s-c { position: absolute; right: 3px; top: 11px; }
.nav-tabs { margin-top: 17px; margin-left: 20px; display: flex; gap: 23px; height: 27px; }
.nt { width: 26px; text-align: center; line-height: 20px; height: 27px; color: #555; }
.nt.on { color: #2b579a; border-bottom: 3px solid #2b579a; font-weight: 500; }
.scrollup { margin-left: 35px; width: 290px; height: 18px; background: #fff; border: 1px solid #c6c6c6; display: flex; align-items: center; justify-content: center; margin-top: 4px; }
.tree { list-style: none; margin: 0; padding: 0; }
.node { height: 21px; line-height: 20px; padding-left: 5px; white-space: nowrap; position: relative; color: #505050; }
.node.sel { background: #c3d6f1; width: 256px; }
.exp { position: absolute; left: -11px; top: 7px; }
.exp.e2 { top: 5px; }

.doc { flex: 1; min-width: 0; display: flex; flex-direction: column; }
.ruler-row { height: 30px; display: flex; flex: none; }
.corner { width: 29px; height: 28px; background: #dcdcdc; padding: 5px 0 0 4px; flex: none; }
.corner-in { display: flex; width: 20px; height: 20px; background: #fff; align-items: center; justify-content: center; }
.hruler { margin-left: 247px; margin-top: 6px; width: 1031px; height: 16px; position: relative; }
.hruler > svg:first-child { display: block; }
.m-l { position: absolute; left: 115px; top: -3px; }
.m-r { position: absolute; left: 902px; top: 10px; }
.rn { font: 9px "Noto Sans", sans-serif; fill: #555; }
.doc-body { flex: 1; min-height: 0; display: flex; }
.vruler { width: 17px; margin-left: 5px; margin-top: 73px; flex: none; }
.vruler svg { display: block; }
.canvas { flex: 1; min-width: 0; }
.prev-page { margin: 1px 0 0 39px; width: 1460px; height: 53px; background: #fff; border: 1px solid #c6c6c6; }
.page { margin: 20px 0 0 253px; width: 1033px; height: 756px; background: #fff; border: 1px solid #c6c6c6; border-bottom: 0; padding: 128px 0 0 123px; position: relative; overflow: hidden; color: #1c1c1c; }
.crop { position: absolute; top: 91px; width: 31px; height: 31px; border-bottom: 1px solid #b4b4b4; }
.crop-l { left: 91px; border-right: 1px solid #b4b4b4; }
.crop-r { left: 909px; border-left: 1px solid #b4b4b4; }

.line { height: 40px; line-height: 40px; font-size: 20px; letter-spacing: .8px; white-space: pre; position: relative; font-weight: 300; font-family: "Noto Sans CJK SC", sans-serif; display: flex; align-items: center; }
.line > span { flex: none; }
.l7 { letter-spacing: .7px; }
.m { font: 17.4px/40px "Liberation Mono", monospace; letter-spacing: 0; }
.m.tiny { font-size: 10px; }
.mb { -webkit-text-stroke: .35px #1c1c1c; }
.u { text-decoration: underline; text-decoration-thickness: 1px; text-underline-offset: 3px; }
.b { font-weight: 500; }
.mt2 { margin-top: 2px; } .mt7 { margin-top: 7px; } .mt8 { margin-top: 8px; } .mt13 { margin-top: 13px; } .mt14 { margin-top: 14px; } .mt15 { margin-top: 15px; } .mt21 { margin-top: 21px; }
.i8 { padding-left: 8px; } .i41 { padding-left: 41px; } .i45 { padding-left: 45px; }
.h1 { font-size: 22px; letter-spacing: 1.7px; font-weight: 500; }
.pm { position: absolute; left: -9px; top: 17px; width: 4px; height: 6px; background: #000; }
.h-n { font: 700 22px/40px "Liberation Mono", monospace; letter-spacing: -1.200px; width: 73px; }
.title { font-size: 22px; letter-spacing: 0; padding-left: 344px; font-weight: 400; }
.tc { width: 38px; }
.sp5 { width: 5px; }
.rt { width: 13px; height: 14px; margin-left: 4px; flex: none; }
.r0 { margin-left: 0; } .r9 { margin-left: 9px; } .rn3 { margin-left: -3px; }
.wavy { text-decoration: underline wavy #d7191f 1px; text-underline-offset: 3px; }
.arrow { position: absolute; left: 130px; top: 565px; }

.status { height: 22px; background: #f1f1f1; border-top: 1px solid #c6c6c6; display: flex; align-items: center; position: relative; flex: none; color: #444; }
.st { white-space: nowrap; }
.s1 { margin-left: 18px; width: 130px; letter-spacing: .35px; } .s2 { width: 101px; } .s3 { width: 14px; } .s4 { margin-left: 18px; width: 122px; } .s5 { width: 74px; } .s6 { flex: none; margin-right: 2px; } .s7 { font-weight: 500; color: #333; }
.views { margin-left: auto; display: flex; align-items: center; height: 21px; padding-right: 6px; }
.v-on { width: 40px; height: 21px; background: #c6c6c6; display: flex; align-items: center; justify-content: center; margin-left: 14px; }
.v3 { margin-left: 13px; }
.z-minus { width: 7px; height: 1px; background: #444; margin-left: 19px; }
.slider { width: 100px; height: 1px; background: #444; margin-left: 6px; position: relative; }
.slider i { position: absolute; left: 52px; top: -6px; width: 5px; height: 12px; background: #444; }
.z-plus { width: 8px; height: 8px; margin-left: 5px; background: linear-gradient(#444,#444) center/8px 1px no-repeat, linear-gradient(#444,#444) center/1px 8px no-repeat; }
.zoom { margin-left: 13px; width: 32px; font-size: 12.5px; }
.taskbar { height: 6px; background: #27383f; flex: none; padding-left: 938px; }
.taskbar span { display: block; width: 48px; height: 6px; background: #5a676c; }
</style>
